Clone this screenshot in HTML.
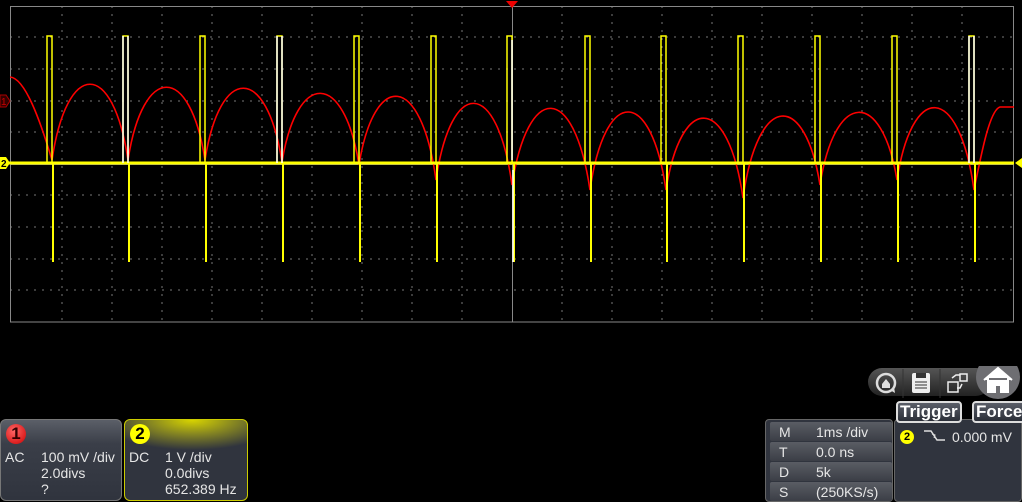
<!DOCTYPE html>
<html><head><meta charset="utf-8"><style>
*{margin:0;padding:0;box-sizing:border-box}
body{width:1022px;height:502px;background:#000;overflow:hidden;position:relative;font-family:"Liberation Sans",sans-serif;color:#e6e6e6;font-size:14px}
.abs{position:absolute}
.ch{position:absolute;top:419px;height:82px;border-radius:6px;background:linear-gradient(#5b5f68 0,#3a3e48 30%,#30343e 100%);border:1px solid #777}
.ch span{position:absolute;white-space:nowrap}
.num{position:absolute;left:5px;top:4px;width:20px;height:20px;border-radius:50%;font-weight:bold;font-size:17px;text-align:center;line-height:20px}
.tb{position:absolute;top:419px;height:83px;background:#30343e;border:1px solid #666;border-radius:4px}
.row{position:absolute;left:4px;width:122px;height:19px;background:linear-gradient(#5a5d64,#3b3e46);border-radius:2px}
.row span{position:absolute;top:2px;white-space:nowrap}
.btn{position:absolute;top:401px;height:22px;border:2px solid #ddd;border-radius:4px;background:linear-gradient(#5a5e68,#2b2f38);color:#fff;font-weight:bold;font-size:17px;line-height:18px;padding:0 2px}
</style></head><body>
<svg class="abs" style="left:0;top:0" width="1022" height="330">
<g stroke="#777" stroke-width="1" stroke-dasharray="2,6" fill="none">
<path d="M62 6V322M112 6V322M162 6V322M212 6V322M262 6V322M312 6V322M362 6V322M412 6V322M462 6V322M562 6V322M612 6V322M662 6V322M712 6V322M762 6V322M812 6V322M862 6V322M912 6V322M962 6V322"/>
<path d="M10 37H1014M10 69H1014M10 101H1014M10 132H1014M10 195H1014M10 227H1014M10 259H1014M10 290H1014"/>
</g>
<g stroke="#888" stroke-width="1" fill="none">
<rect x="10.5" y="6.5" width="1003" height="315.5"/>
<path d="M512.5 6V322M10 164.5H1014"/>
</g>
<path d="M10 77 C25 78 40 120 52 160 C67 59 113 59 128 160 C143 63 190 63 205 160 C220 64 267 64 282 162 C297 70 344 70 359 165 C374 71 421 71 436 180 C451 77 497 77 512 185 C528 82 574 82 590 190 C605 86 651 86 666 190 C681 93 728 93 743 198 C758 91 805 91 820 185 C835 89 882 89 897 180 C912 82 959 82 974 190 C982 150 990 110 1000 107 L1014 107" stroke="#f00" stroke-width="1.6" fill="none"/>
<g stroke-width="1.5" fill="none">
<path stroke="#ff0" d="M0 163H47V36H52V163H123V36H128V163H200V36H205V163H277V36H282V163H354V36H359V163H431V36H436V163H507V36H512V163H585V36H590V163H661V36H666V163H738V36H743V163H815V36H820V163H892V36H897V163H969V36H974V163H1014"/>
<path stroke="#ff0" stroke-width="3" d="M0 163H1014"/>
<path stroke="#ff0" stroke-width="2" d="M53 163V262M129 163V262M206 163V262M283 163V262M360 163V262M437 163V262M514 163V262M591 163V262M667 163V262M744 163V262M821 163V262M898 163V262M975 163V262"/>
<path stroke="#fff" d="M123 36V163M128 36V163M277 36V163M282 36V163M512 40V160M513 170V262M969 36V163M974 36V163"/>
</g>
<path d="M506 1H518L512 8Z" fill="#e00"/>
<path d="M0 95H6L10 101L6 107H0Z" fill="#300" stroke="#a00"/>
<text x="1" y="105" fill="#c00" font-size="10" font-family="Liberation Sans">1</text>
<path d="M0 157H6L10 163L6 169H0Z" fill="#ff0"/>
<text x="1" y="167" fill="#000" font-size="10" font-weight="bold" font-family="Liberation Sans">2</text>
<path d="M1022 158L1015 163L1022 168Z" fill="#ff0"/>
</svg>

<div class="ch" style="left:0;width:122px">
<div class="num" style="background:radial-gradient(circle at 40% 35%,#f66,#c00);color:#300">1</div>
<span style="left:4px;top:29px">AC</span>
<span style="left:40px;top:29px">100 mV /div</span>
<span style="left:40px;top:45px">2.0divs</span>
<span style="left:40px;top:61px">?</span>
</div>
<div class="ch" style="left:124px;width:124px;border-color:#cc0;background:radial-gradient(ellipse 90px 30px at 55% 0,#d8d400 0,#8a8a20 45%,rgba(50,54,62,0) 100%),#30343e">
<div class="num" style="background:#ff0;color:#000">2</div>
<span style="left:4px;top:29px">DC</span>
<span style="left:40px;top:29px">1 V /div</span>
<span style="left:40px;top:45px">0.0divs</span>
<span style="left:40px;top:61px">652.389 Hz</span>
</div>

<div class="abs" style="left:868px;top:368px;width:122px;height:28px;border-radius:14px;background:linear-gradient(#555,#222)"></div>
<svg class="abs" style="left:868px;top:366px" width="154" height="34">
<circle cx="18" cy="17" r="9" fill="none" stroke="#ddd" stroke-width="2.5"/>
<path d="M14 18L18 13L22 18V22H14Z" fill="#ddd"/>
<path d="M22 24l5 3-1-6z" fill="#ddd"/>
<line x1="35" y1="3" x2="35" y2="32" stroke="#333"/>
<rect x="44" y="7" width="18" height="20" rx="2" fill="#eee"/>
<rect x="48" y="7" width="10" height="5" fill="#333"/>
<path d="M47 16H59M47 19H59M47 22H59" stroke="#333"/>
<line x1="72" y1="3" x2="72" y2="32" stroke="#333"/>
<rect x="80" y="16" width="10" height="10" fill="none" stroke="#eee" stroke-width="1.5"/>
<rect x="92" y="8" width="7" height="7" fill="none" stroke="#eee" stroke-width="1.5"/>
<path d="M84 12l4-3 4 0M94 18l-2 4-3 0" stroke="#eee" fill="none" stroke-width="1.5"/>
<circle cx="130" cy="11" r="22" fill="#6e6e72"/>
<path d="M116 14L130 2L144 14M120 12V26H127V19H133V26H140V12" fill="#fff" stroke="#fff" stroke-width="2"/>
</svg>

<div class="tb" style="left:765px;width:128px">
<div class="row" style="top:2px"><span style="left:9px">M</span><span style="left:46px">1ms /div</span></div>
<div class="row" style="top:22px"><span style="left:9px">T</span><span style="left:46px">0.0 ns</span></div>
<div class="row" style="top:42px"><span style="left:9px">D</span><span style="left:46px">5k</span></div>
<div class="row" style="top:62px"><span style="left:9px">S</span><span style="left:46px">(250KS/s)</span></div>
</div>
<div class="tb" style="left:894px;width:128px"></div>
<div class="btn" style="left:896px">Trigger</div>
<div class="btn" style="left:972px">Force</div>
<div class="abs" style="left:900px;top:430px;width:14px;height:14px;border-radius:50%;background:#ff0;color:#000;font-size:11px;font-weight:bold;text-align:center;line-height:14px">2</div>
<svg class="abs" style="left:923px;top:428px" width="25" height="16"><path d="M1 3H8L14 12H22" stroke="#ddd" stroke-width="1.5" fill="none"/><path d="M9 6l3 1-1 3" stroke="#ddd" fill="none"/></svg>
<div class="abs" style="left:952px;top:429px">0.000 mV</div>
</body></html>
